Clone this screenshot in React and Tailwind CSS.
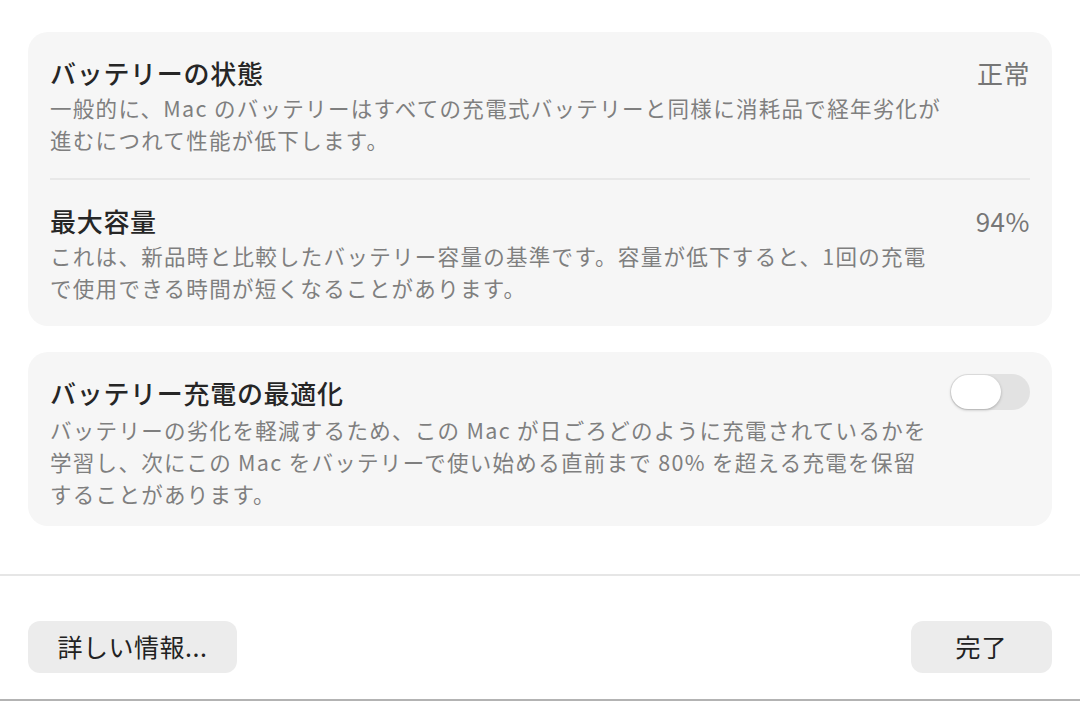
import React from 'react';

const font = { fontFamily: '"Noto Sans CJK JP", "Noto Sans", sans-serif' };

const Row = ({ title, value, lines, right, gap = 'mt-[2px]' }) => (
  <div className="flex justify-between items-start">
    <div className="flex flex-col">
      <div className="text-[26px] leading-[34px] font-medium text-[#262626] tracking-[0.7px]">{title}</div>
      <div className={`${gap} text-[21.5px] leading-[32px] text-[#7f7f7f] tracking-[1.3px] whitespace-nowrap`}>
        {lines.map((l, i) => (
          <div key={i}>{l}</div>
        ))}
      </div>
    </div>
    {value && <div className="text-[26px] leading-[34px] text-[#767676] tracking-[0.5px]">{value}</div>}
    {right}
  </div>
);

const Toggle = () => (
  <div className="-mt-[2px] w-[80px] h-[36px] rounded-full bg-[#e2e2e2] p-[1px] flex items-center">
    <div className="w-[50px] h-[34px] rounded-full bg-white shadow-[0_1px_3px_rgba(0,0,0,0.25)]" />
  </div>
);

export default function App() {
  return (
    <div className="w-[1080px] h-[701px] bg-white flex flex-col overflow-hidden" style={font}>
      <div className="px-[28px] pt-[32px] flex flex-col gap-[26px]">
        <div className="rounded-[20px] bg-[#f6f6f6] px-[22px]">
          <div className="pt-[24px] pb-[22px]">
            <Row
              title="バッテリーの状態"
              value="正常"
              lines={[
                '一般的に、Mac のバッテリーはすべての充電式バッテリーと同様に消耗品で経年劣化が',
                '進むにつれて性能が低下します。',
              ]}
            />
          </div>
          <div className="border-t-2 border-[#e8e8e8]" />
          <div className="pt-[24px] pb-[22px]">
            <Row
              title="最大容量"
              value="94%"
              lines={[
                'これは、新品時と比較したバッテリー容量の基準です。容量が低下すると、1回の充電',
                'で使用できる時間が短くなることがあります。',
              ]}
            />
          </div>
        </div>
        <div className="rounded-[20px] bg-[#f6f6f6] px-[22px] pt-[24px] pb-[16px]">
          <Row
            title="バッテリー充電の最適化"
            right={<Toggle />}
            gap="mt-[4px]"
            lines={[
              'バッテリーの劣化を軽減するため、この Mac が日ごろどのように充電されているかを',
              '学習し、次にこの Mac をバッテリーで使い始める直前まで 80% を超える充電を保留',
              'することがあります。',
            ]}
          />
        </div>
      </div>
      <div className="mt-[48px] border-t-2 border-[#e6e6e6]" />
      <div className="flex-1 flex justify-between items-start px-[28px] pt-[45px]">
        <button className="h-[52px] w-[209px] rounded-[12px] bg-[#ececec] text-[25px] text-[#222] tracking-[0.5px]">
          詳しい情報...
        </button>
        <button className="h-[52px] w-[141px] rounded-[12px] bg-[#ececec] text-[25px] text-[#222] tracking-[1px]">
          完了
        </button>
      </div>
      <div className="h-[2px] bg-[#b3b3b3]" />
    </div>
  );
}
